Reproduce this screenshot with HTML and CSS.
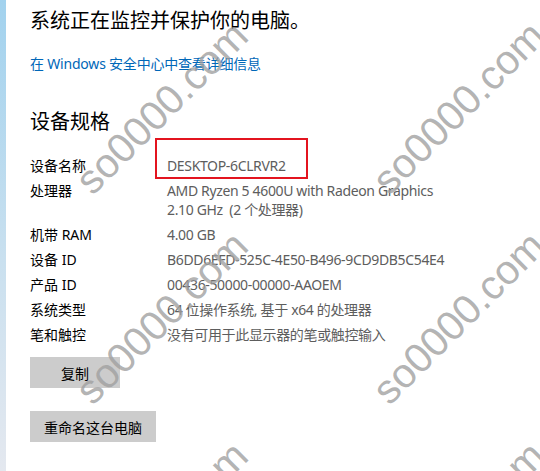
FILE: index.html
```html
<!DOCTYPE html>
<html lang="zh-CN">
<head>
    <meta charset="UTF-8">
    <meta name="viewport" content="width=device-width, initial-scale=1.0">
    <title>关于</title>
    <link rel="stylesheet" href="styles.css">
</head>
<body>
    <div class="window">
        <div class="side-strip"></div>
        <div class="content">
            <h2 class="status">系统正在监控并保护你的电脑。</h2>
            <a class="link" href="#">在 Windows 安全中心中查看详细信息</a>

            <h2 class="section-title">设备规格</h2>
            <div class="specs">
                <div class="spec-label">设备名称</div>
                <div class="spec-value highlight">DESKTOP-6CLRVR2<span class="mark-box"></span></div>

                <div class="spec-label">处理器</div>
                <div class="spec-value">AMD Ryzen 5 4600U with Radeon Graphics<br>2.10 GHz&nbsp;&nbsp;(2 个处理器)</div>

                <div class="spec-label">机带 RAM</div>
                <div class="spec-value">4.00 GB</div>

                <div class="spec-label">设备 ID</div>
                <div class="spec-value">B6DD6EFD-525C-4E50-B496-9CD9DB5C54E4</div>

                <div class="spec-label">产品 ID</div>
                <div class="spec-value">00436-50000-00000-AAOEM</div>

                <div class="spec-label">系统类型</div>
                <div class="spec-value">64 位操作系统, 基于 x64 的处理器</div>

                <div class="spec-label">笔和触控</div>
                <div class="spec-value">没有可用于此显示器的笔或触控输入</div>
            </div>

            <div class="actions">
                <button class="btn">复制</button>
                <button class="btn">重命名这台电脑</button>
            </div>
        </div>
    </div>

    <div class="watermarks">
        <span class="wm wm-a">so0000.com</span>
        <span class="wm wm-b">so0000.com</span>
        <span class="wm wm-c">so0000.com</span>
        <span class="wm wm-d">so0000.com</span>
        <span class="wm wm-e">so0000.com</span>
        <span class="wm wm-f">so0000.com</span>
    </div>
</body>
</html>
```

FILE: styles.css
```css
body {
    font-family: "Noto Sans", "Noto Sans CJK SC", sans-serif;
    background-color: #fff;
    color: #000;
    margin: 0;
    padding: 0;
    height: 471px;
    overflow: hidden;
    position: relative;
}
.window {
    display: flex;
    height: 100%;
}
.side-strip {
    width: 6px;
    flex-shrink: 0;
    background: linear-gradient(#a2d2ee, #c9e0ef 55%, #e4e8ef);
}
.content {
    flex: 1;
    padding: 7px 0 0 24px;
    display: flex;
    flex-direction: column;
    align-items: flex-start;
}
.status,
.section-title {
    font-size: 20px;
    font-weight: normal;
    line-height: 28px;
    margin: 0;
}
.link {
    display: block;
    margin-top: 19px;
    font-size: 14px;
    line-height: 20px;
    color: #0067b8;
    text-decoration: none;
    letter-spacing: -0.2px;
}
.section-title {
    margin-top: 34px;
}
.specs {
    margin-top: 20px;
    display: grid;
    grid-template-columns: 137px auto;
    row-gap: 6px;
    font-size: 14px;
    line-height: 19px;
}
.spec-label {
    color: #000;
}
.spec-value {
    color: #5d5d5d;
    letter-spacing: -0.35px;
}
.highlight {
    position: relative;
}
.mark-box {
    position: absolute;
    left: -12px;
    top: -18px;
    width: 149px;
    height: 37px;
    border: 2px solid #e3141f;
}
.actions {
    margin-top: 13px;
    display: flex;
    flex-direction: column;
    align-items: flex-start;
    gap: 23px;
}
.btn {
    font-family: inherit;
    font-size: 14px;
    height: 31px;
    min-width: 90px;
    padding: 0 14px;
    border: none;
    background-color: #cccccc;
    color: #000;
}
.watermarks {
    position: absolute;
    inset: 0;
    overflow: hidden;
    pointer-events: none;
}
.wm {
    position: absolute;
    font-family: "Liberation Sans", Arial, sans-serif;
    font-size: 41px;
    color: rgba(160, 160, 160, 0.8);
    white-space: nowrap;
    transform: translate(-50%, -50%) rotate(-45deg);
}
.wm-a { left: 162px; top: 108px; }
.wm-b { left: 459px; top: 108px; }
.wm-c { left: 162px; top: 318px; }
.wm-d { left: 459px; top: 318px; }
.wm-e { left: 162px; top: 528px; }
.wm-f { left: 459px; top: 528px; }
```
